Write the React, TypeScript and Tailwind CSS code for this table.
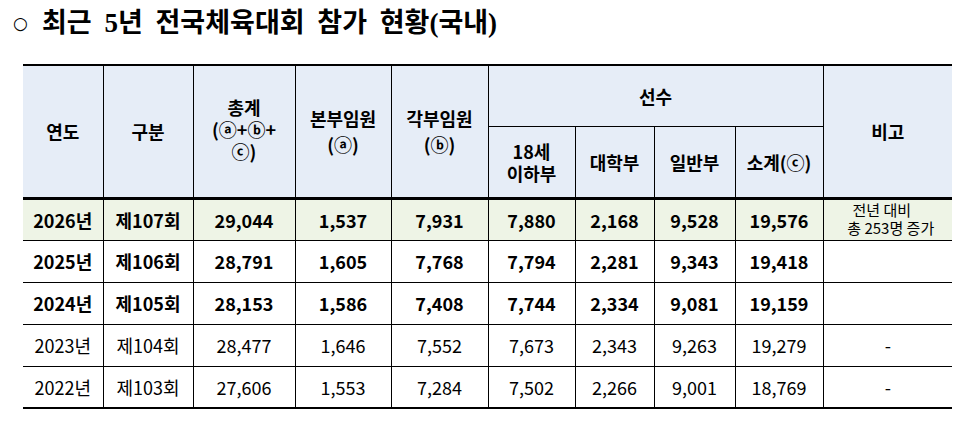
import React from "react";

const font = { fontFamily: '"Noto Sans CJK KR", "Noto Sans", sans-serif' };

const rows = [
  { year: "2026년", round: "제107회", total: "29,044", hq: "1,537", dept: "7,931", u18: "7,880", univ: "2,168", gen: "9,528", sub: "19,576", note: "note", bold: true, green: true },
  { year: "2025년", round: "제106회", total: "28,791", hq: "1,605", dept: "7,768", u18: "7,794", univ: "2,281", gen: "9,343", sub: "19,418", note: "", bold: true },
  { year: "2024년", round: "제105회", total: "28,153", hq: "1,586", dept: "7,408", u18: "7,744", univ: "2,334", gen: "9,081", sub: "19,159", note: "", bold: true },
  { year: "2023년", round: "제104회", total: "28,477", hq: "1,646", dept: "7,552", u18: "7,673", univ: "2,343", gen: "9,263", sub: "19,279", note: "-", dashBold: true },
  { year: "2022년", round: "제103회", total: "27,606", hq: "1,553", dept: "7,284", u18: "7,502", univ: "2,266", gen: "9,001", sub: "18,769", note: "-" },
];

const widths = [80, 90, 102, 96, 97, 87, 79, 81, 88, 129];

export default function App() {
  const th = "p-0 text-center align-middle font-bold text-[18px] leading-[22px] text-black bg-[#e6edf7] border-black";
  return (
    <div className="w-[975px] h-[434px] bg-white text-black" style={font}>
      {/* Title */}
      <div className="h-[64px] pt-[6px] flex items-start">
        <span className="inline-block w-[42px] pl-[13px] text-[17px] leading-[34px]" style={{ fontFamily: '"DejaVu Sans", sans-serif' }}>
          ○
        </span>
        <span className="text-[27px] font-bold leading-[34px] [word-spacing:6px]" style={{ fontFamily: '"Liberation Serif", "Noto Sans CJK KR", serif' }}>
          최근 5년 전국체육대회 참가 현황(국내)
        </span>
      </div>

      <table className="ml-[23px] table-fixed border-collapse w-[929px]">
        <colgroup>
          {widths.map((w, i) => (
            <col key={i} style={{ width: w }} />
          ))}
        </colgroup>
        <thead>
          <tr className="h-[61px]">
            <th rowSpan={2} className={`${th} border-t-2 border-r border-b-[3px] border-b-double`}>연도</th>
            <th rowSpan={2} className={`${th} border-t-2 border-r border-b-[3px] border-b-double`}>구분</th>
            <th rowSpan={2} className={`${th} border-t-2 border-r border-b-[3px] border-b-double`}>
              <div className="pb-[4px]">
                총계
                <br />
                (ⓐ+ⓑ+
                <br />
                ⓒ)
              </div>
            </th>
            <th rowSpan={2} className={`${th} border-t-2 border-r border-b-[3px] border-b-double leading-[26px]`}>
              본부임원
              <br />
              (ⓐ)
            </th>
            <th rowSpan={2} className={`${th} border-t-2 border-r border-b-[3px] border-b-double leading-[26px]`}>
              각부임원
              <br />
              (ⓑ)
            </th>
            <th colSpan={4} className={`${th} border-t-2 border-r border-b`}>선수</th>
            <th rowSpan={2} className={`${th} border-t-2 border-b-[3px] border-b-double`}>비고</th>
          </tr>
          <tr className="h-[72px]">
            <th className={`${th} border-r border-b-[3px] border-b-double`}>
              18세
              <br />
              이하부
            </th>
            <th className={`${th} border-r border-b-[3px] border-b-double`}>대학부</th>
            <th className={`${th} border-r border-b-[3px] border-b-double`}>일반부</th>
            <th className={`${th} border-r border-b-[3px] border-b-double`}>소계(ⓒ)</th>
          </tr>
        </thead>
        <tbody>
          {rows.map((r, i) => {
            const last = i === rows.length - 1;
            const td = `p-0 text-center align-middle text-[18px] leading-[22px] border-black ${r.bold ? "font-bold" : "font-normal"} ${r.green ? "bg-[#eef4e6]" : "bg-white"} ${last ? "border-b-2" : "border-b"}`;
            const cells = [r.year, r.round, r.total, r.hq, r.dept, r.u18, r.univ, r.gen, r.sub];
            return (
              <tr key={r.year} className="h-[42px]">
                {cells.map((c, j) => (
                  <td key={j} className={`${td} border-r`}>
                    {c}
                  </td>
                ))}
                <td className={`${td} ${r.dashBold ? "font-bold" : ""}`}>
                  {r.note === "note" ? (
                    <div className="text-[15px] leading-[18px] font-normal pb-[2px]">
                      <div className="pr-[12px]">전년 대비</div>
                      <div className="pl-[6px]">총 253명 증가</div>
                    </div>
                  ) : (
                    r.note
                  )}
                </td>
              </tr>
            );
          })}
        </tbody>
      </table>
    </div>
  );
}
